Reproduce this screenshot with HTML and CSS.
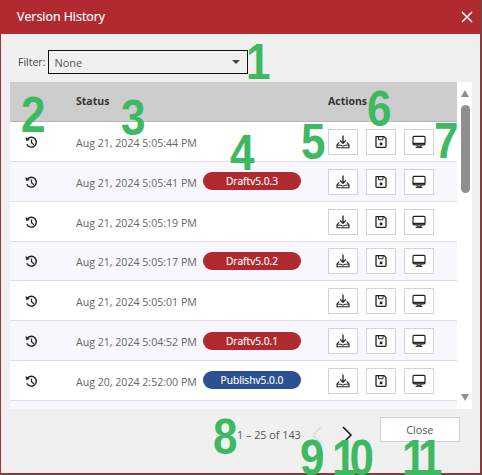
FILE: index.html
```html
<!DOCTYPE html>
<html lang="en">
<head>
<meta charset="utf-8">
<title>Version History</title>
<link rel="stylesheet" href="styles.css">
</head>
<body>
<svg class="defs" width="0" height="0" aria-hidden="true">
  <symbol id="i-history" viewBox="0 0 14 14">
    <path d="M2.8 3.2A5.3 5.3 0 1 1 2 8.8" fill="none" stroke="currentColor" stroke-width="1.5"/>
    <path d="M0.6 1.2 L1.2 5.4 L5.2 4.4 Z" fill="currentColor"/>
    <path d="M7 3.8V7.2L9.6 9.4" fill="none" stroke="currentColor" stroke-width="1.4"/>
  </symbol>
  <symbol id="i-download" viewBox="0 0 14 14">
    <path d="M7 0.6V8.2M4.2 5.4L7 8.4L9.8 5.4" fill="none" stroke="currentColor" stroke-width="1.3"/>
    <path d="M3.2 7.4L1 10V12.8H13V10L10.8 7.4" fill="none" stroke="currentColor" stroke-width="1.1"/>
    <path d="M1 10.2H4.8L7 11.2L9.2 10.2H13" fill="none" stroke="currentColor" stroke-width="1"/>
  </symbol>
  <symbol id="i-save" viewBox="0 0 14 14">
    <path d="M2.2 1.6H10L12 3.6V11.2Q12 12.4 10.8 12.4H3.2Q2 12.4 2 11.2V1.8Z" fill="none" stroke="currentColor" stroke-width="1.3"/>
    <path d="M4.6 2V4.8H9V2" fill="none" stroke="currentColor" stroke-width="1"/>
    <rect x="5.8" y="7.6" width="2.6" height="2.6" fill="currentColor"/>
  </symbol>
  <symbol id="i-monitor" viewBox="0 0 14 14">
    <rect x="1" y="1.4" width="12" height="8.4" rx="1" fill="none" stroke="currentColor" stroke-width="1.2"/>
    <path d="M1 8.6H13" stroke="currentColor" stroke-width="1.6"/>
    <path d="M5.2 10V11.8H8.8V10M3.6 12.4H10.4" fill="none" stroke="currentColor" stroke-width="1"/>
  </symbol>
</svg>

<div class="dialog">
  <header class="titlebar">
    <h1 class="title">Version History</h1>
    <svg class="close-x" width="12" height="12" viewBox="0 0 12 12" aria-label="Close"><path d="M1 1L11 11M11 1L1 11" stroke="#fff" stroke-width="1.5"/></svg>
  </header>

  <div class="filter">
    <label class="filter-label">Filter:</label>
    <div class="select"><span>None</span><i class="caret"></i></div>
  </div>

  <div class="table-wrap">
    <div class="table">
      <div class="row head">
        <div class="c-icon"></div>
        <div class="c-status">Status</div>
        <div class="c-actions">Actions</div>
      </div>

      <div class="row">
        <div class="c-icon"><svg class="ico hist"><use href="#i-history"/></svg></div>
        <div class="c-status"><span class="date">Aug 21, 2024 5:05:44 PM</span></div>
        <div class="c-actions"><button class="act"><svg class="ico"><use href="#i-download"/></svg></button><button class="act"><svg class="ico"><use href="#i-save"/></svg></button><button class="act"><svg class="ico"><use href="#i-monitor"/></svg></button></div>
      </div>
      <div class="row alt">
        <div class="c-icon"><svg class="ico hist"><use href="#i-history"/></svg></div>
        <div class="c-status"><span class="date">Aug 21, 2024 5:05:41 PM</span><span class="pill draft">Draftv5.0.3</span></div>
        <div class="c-actions"><button class="act"><svg class="ico"><use href="#i-download"/></svg></button><button class="act"><svg class="ico"><use href="#i-save"/></svg></button><button class="act"><svg class="ico"><use href="#i-monitor"/></svg></button></div>
      </div>
      <div class="row">
        <div class="c-icon"><svg class="ico hist"><use href="#i-history"/></svg></div>
        <div class="c-status"><span class="date">Aug 21, 2024 5:05:19 PM</span></div>
        <div class="c-actions"><button class="act"><svg class="ico"><use href="#i-download"/></svg></button><button class="act"><svg class="ico"><use href="#i-save"/></svg></button><button class="act"><svg class="ico"><use href="#i-monitor"/></svg></button></div>
      </div>
      <div class="row alt">
        <div class="c-icon"><svg class="ico hist"><use href="#i-history"/></svg></div>
        <div class="c-status"><span class="date">Aug 21, 2024 5:05:17 PM</span><span class="pill draft">Draftv5.0.2</span></div>
        <div class="c-actions"><button class="act"><svg class="ico"><use href="#i-download"/></svg></button><button class="act"><svg class="ico"><use href="#i-save"/></svg></button><button class="act"><svg class="ico"><use href="#i-monitor"/></svg></button></div>
      </div>
      <div class="row">
        <div class="c-icon"><svg class="ico hist"><use href="#i-history"/></svg></div>
        <div class="c-status"><span class="date">Aug 21, 2024 5:05:01 PM</span></div>
        <div class="c-actions"><button class="act"><svg class="ico"><use href="#i-download"/></svg></button><button class="act"><svg class="ico"><use href="#i-save"/></svg></button><button class="act"><svg class="ico"><use href="#i-monitor"/></svg></button></div>
      </div>
      <div class="row alt">
        <div class="c-icon"><svg class="ico hist"><use href="#i-history"/></svg></div>
        <div class="c-status"><span class="date">Aug 21, 2024 5:04:52 PM</span><span class="pill draft">Draftv5.0.1</span></div>
        <div class="c-actions"><button class="act"><svg class="ico"><use href="#i-download"/></svg></button><button class="act"><svg class="ico"><use href="#i-save"/></svg></button><button class="act"><svg class="ico"><use href="#i-monitor"/></svg></button></div>
      </div>
      <div class="row">
        <div class="c-icon"><svg class="ico hist"><use href="#i-history"/></svg></div>
        <div class="c-status"><span class="date">Aug 20, 2024 2:52:00 PM</span><span class="pill publish">Publishv5.0.0</span></div>
        <div class="c-actions"><button class="act"><svg class="ico"><use href="#i-download"/></svg></button><button class="act"><svg class="ico"><use href="#i-save"/></svg></button><button class="act"><svg class="ico"><use href="#i-monitor"/></svg></button></div>
      </div>
      <div class="row-peek"></div>
    </div>

    <div class="scrollbar">
      <i class="arrow up"></i>
      <div class="track"><div class="thumb"></div></div>
      <i class="arrow down"></i>
    </div>
  </div>

  <footer class="footer">
    <span class="range">1 – 25 of 143</span>
    <svg class="chev" width="16" height="20" viewBox="0 0 16 20"><path d="M12 2L4 10L12 18" fill="none" stroke="#dcdcdc" stroke-width="1.5"/></svg>
    <svg class="chev next" width="16" height="20" viewBox="0 0 16 20"><path d="M4 2L12 10L4 18" fill="none" stroke="#111" stroke-width="1.5"/></svg>
    <button class="close-btn">Close</button>
  </footer>
</div>

<span class="num n1">1</span>
<span class="num n2">2</span>
<span class="num n3">3</span>
<span class="num n4">4</span>
<span class="num n5">5</span>
<span class="num n6">6</span>
<span class="num n7">7</span>
<span class="num n8">8</span>
<span class="num n9">9</span>
<span class="num n10">10</span>
<span class="num n11">11</span>
</body>
</html>
```
FILE: styles.css
```css
* { box-sizing: border-box; }
html, body { margin: 0; padding: 0; }
body {
  position: relative;
  width: 482px;
  height: 475px;
  overflow: hidden;
  background: #5a4a48;
  font-family: "Open Sans", "Noto Sans", sans-serif;
  font-size: 11px;
  color: #444;
}
.defs { position: absolute; }

.dialog {
  width: 481px;
  height: 474px;
  background: #f0f0f0;
  border: 1px solid #b02a30;
  border-top: 0;
  display: flex;
  flex-direction: column;
}

.titlebar {
  height: 34px;
  flex: none;
  background: #b02a30;
  display: flex;
  align-items: center;
  justify-content: space-between;
  padding: 0 6px 1px 16px;
}
.title { margin: 0; font-size: 12.4px; font-weight: 400; color: #fff; -webkit-text-stroke: 0.2px #fff; }
.close-x { display: block; margin-right: 1px; }

.filter {
  height: 48px;
  flex: none;
  display: flex;
  align-items: flex-start;
  padding: 16px 0 0 17px;
  gap: 3px;
}
.filter-label { line-height: 24px; color: #444; font-size: 10.5px; }
.select {
  width: 200px;
  height: 24px;
  border: 1px solid #111;
  display: flex;
  align-items: center;
  justify-content: space-between;
  padding: 0 7px 0 5px;
  color: #555;
}
.caret {
  width: 0; height: 0;
  border-left: 4px solid transparent;
  border-right: 4px solid transparent;
  border-top: 4px solid #444;
}

.table-wrap {
  display: flex;
  height: 327px;
  flex: none;
  margin: 0 8px 0 9px;
}
.table { width: 447px; flex: none; overflow: hidden; background: #fff; }
.row {
  display: flex;
  align-items: center;
  height: 39.85px;
  background: #fff;
  border-bottom: 1px solid #dfdfe6;
}
.row.alt { background: #f7f7fd; }
.row.head {
  height: 40px;
  background: #cdcdcd;
  border-bottom: 1px solid #b5b5b5;
  font-weight: 700;
  color: #333;
  font-size: 10.5px;
  padding-bottom: 2px;
}
.row-peek { height: 8px; background: #f7f7fd; }

.c-icon { width: 66px; flex: none; padding: 2px 0 0 15px; display: flex; }
.c-status { width: 252px; flex: none; display: flex; align-items: center; }
.c-actions { display: flex; gap: 8px; align-items: center; padding-top: 1px; }
.date { width: 127px; flex: none; color: #666; font-size: 10.6px; padding-top: 3px; }

.pill {
  width: 98px;
  height: 18px;
  border-radius: 9px;
  color: #fff;
  font-size: 10.2px;
  -webkit-text-stroke: 0.15px #fff;
  display: flex;
  align-items: center;
  justify-content: center;
}
.pill.draft { background: #b02a30; }
.pill.publish { background: #2b5190; }

.act {
  width: 30px;
  height: 26px;
  padding: 0;
  background: #fff;
  border: 1px solid #d0d3da;
  display: flex;
  align-items: center;
  justify-content: center;
  color: #222;
}
.ico { width: 14px; height: 14px; display: block; color: #222; }
.hist { width: 13px; height: 13px; }

.scrollbar {
  width: 15px;
  background: #fff;
  display: flex;
  flex-direction: column;
  align-items: center;
  padding: 8px 0 8px;
}
.track { flex: 1; width: 100%; padding: 8px 0 0 1px; display: flex; justify-content: center; }
.thumb { width: 9px; height: 88px; border-radius: 5px; background: #8f8f8f; }
.arrow { width: 0; height: 0; border-left: 4.5px solid transparent; border-right: 4.5px solid transparent; }
.arrow.up { border-bottom: 7px solid #8f8f8f; }
.arrow.down { border-top: 7px solid #8f8f8f; }

.footer {
  flex: 1;
  display: flex;
  align-items: flex-start;
  padding-top: 8px;
  padding-left: 236px;
}
.range { font-size: 10.8px; color: #555; margin-top: 10px; }
.chev { margin-top: 8px; margin-left: 8px; flex: none; }
.chev.next { margin-left: 14px; }
.close-btn {
  margin-left: 25px;
  width: 80px;
  height: 25px;
  background: #fff;
  border: 1px solid #d0d3da;
  font: inherit;
  font-size: 10.8px;
  color: #555;
  padding: 0;
}

.num {
  position: absolute;
  font-family: "Liberation Sans", Arial, sans-serif;
  font-weight: 700;
  font-size: 50px;
  line-height: 33px;
  color: #3cb961;
  transform: scaleX(0.88);
  transform-origin: left top;
}
.n1 { left: 246px; top: 46px; }
.n2 { left: 21px; top: 99px; }
.n3 { left: 121px; top: 102px; }
.n4 { left: 230px; top: 137px; }
.n5 { left: 301px; top: 126px; }
.n6 { left: 367px; top: 93px; }
.n7 { left: 434px; top: 125px; }
.n8 { left: 213px; top: 421px; }
.n9 { left: 300px; top: 442px; }
.n10 { left: 332px; top: 442px; letter-spacing: -8px; }
.n11 { left: 402px; top: 442px; letter-spacing: -7px; }
```
